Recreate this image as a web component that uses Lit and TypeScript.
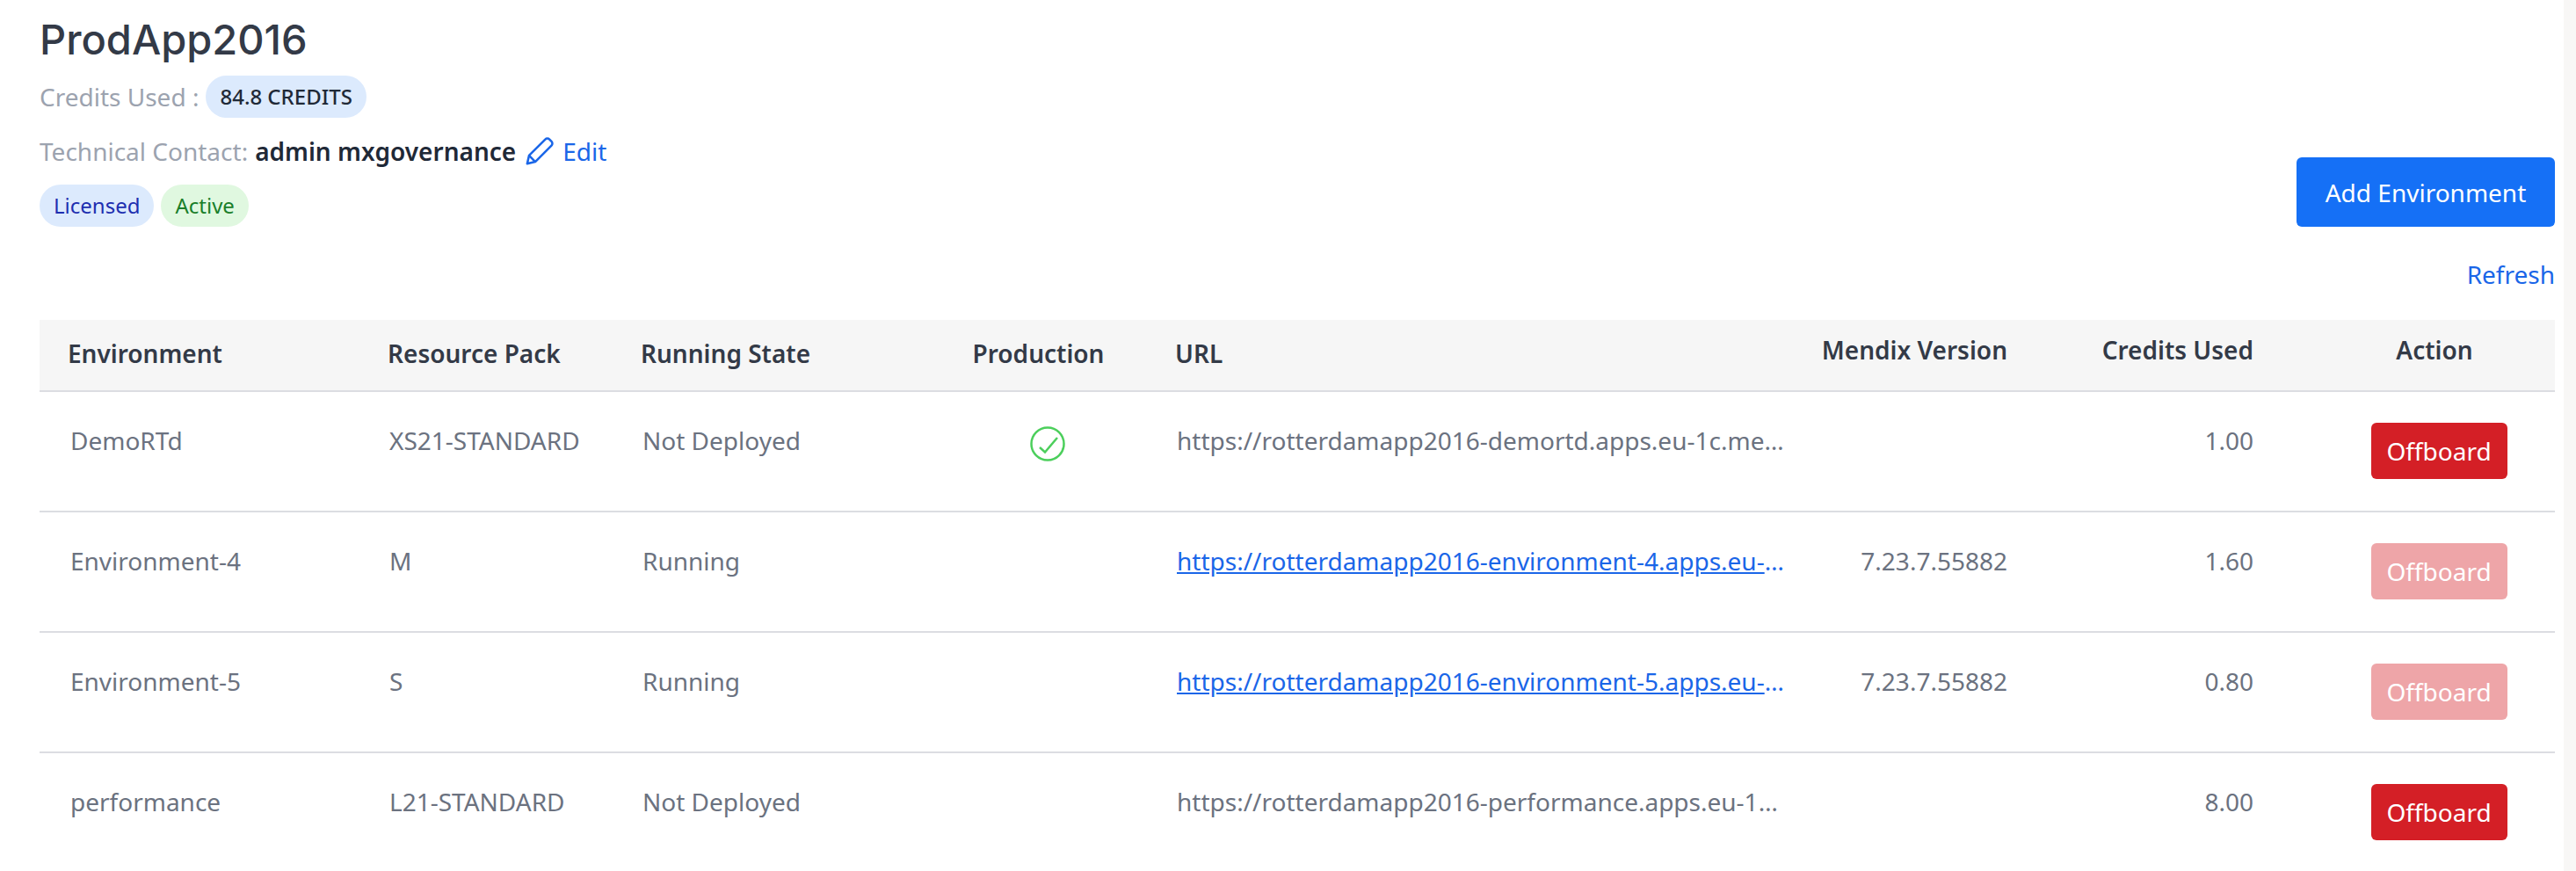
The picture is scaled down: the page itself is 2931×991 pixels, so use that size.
import { LitElement, css, html, nothing } from "lit";
import { customElement } from "lit/decorators.js";

interface Env {
  name: string;
  pack: string;
  state: string;
  production: boolean;
  url: string;
  linked: boolean;
  version: string;
  credits: string;
  canOffboard: boolean;
}

const ENVS: Env[] = [
  {
    name: "DemoRTd",
    pack: "XS21-STANDARD",
    state: "Not Deployed",
    production: true,
    url: "https://rotterdamapp2016-demortd.apps.eu-1c.me",
    linked: false,
    version: "",
    credits: "1.00",
    canOffboard: true,
  },
  {
    name: "Environment-4",
    pack: "M",
    state: "Running",
    production: false,
    url: "https://rotterdamapp2016-environment-4.apps.eu-",
    linked: true,
    version: "7.23.7.55882",
    credits: "1.60",
    canOffboard: false,
  },
  {
    name: "Environment-5",
    pack: "S",
    state: "Running",
    production: false,
    url: "https://rotterdamapp2016-environment-5.apps.eu-",
    linked: true,
    version: "7.23.7.55882",
    credits: "0.80",
    canOffboard: false,
  },
  {
    name: "performance",
    pack: "L21-STANDARD",
    state: "Not Deployed",
    production: false,
    url: "https://rotterdamapp2016-performance.apps.eu-1",
    linked: false,
    version: "",
    credits: "8.00",
    canOffboard: true,
  },
];

@customElement("app-root")
export class AppRoot extends LitElement {
  static styles = css`
    :host {
      display: block;
      height: 991px;
      overflow: hidden;
      background: #fff;
      font-family: "Noto Sans", sans-serif;
      font-size: 28px;
      color: #6b7280;
    }

    .page {
      width: 2917px;
      height: 991px;
      box-sizing: border-box;
      padding: 0 10px 0 45px;
      box-shadow: 14px 0 0 #f8f7f6;
    }

    .top {
      display: flex;
      justify-content: space-between;
      align-items: flex-start;
    }

    h1 {
      margin: 0;
      padding-top: 16px;
      font-family: Inter, sans-serif;
      font-size: 47px;
      font-weight: 500;
      line-height: 58px;
      color: #333a47;
    }

    .line {
      display: flex;
      align-items: center;
      color: #9ca3af;
    }

    .credits {
      margin-top: 12px;
      height: 48px;
    }

    .contact {
      margin-top: 14px;
      height: 48px;
    }

    .contact strong {
      margin-left: 8px;
      font-weight: 600;
      color: #1f2937;
    }

    .edit {
      display: flex;
      align-items: center;
      margin-left: 10px;
      color: #1a66e8;
    }

    .edit svg {
      width: 34px;
      height: 34px;
      margin-right: 9px;
    }

    .pill {
      display: inline-block;
      height: 48px;
      line-height: 48px;
      padding: 0 16px;
      border-radius: 24px;
      font-size: 24px;
      white-space: nowrap;
    }

    .pill.credit {
      margin-left: 8px;
      background: #dceafd;
      color: #1f2937;
      font-weight: 500;
    }

    .pills {
      display: flex;
      gap: 8px;
      margin-top: 14px;
    }

    .pill.licensed {
      background: #dceafd;
      color: #1e2fb0;
    }

    .pill.active {
      background: #e0f8e0;
      color: #1a7f2a;
    }

    .side {
      display: flex;
      flex-direction: column;
      align-items: flex-end;
      padding-top: 179px;
    }

    .add {
      width: 294px;
      height: 79px;
      border: 0;
      border-radius: 6px;
      background: #1570f6;
      color: #fff;
      font: inherit;
    }

    .refresh {
      margin-top: 34px;
      line-height: 40px;
      color: #1a66e8;
    }

    table {
      width: 100%;
      margin-top: 32px;
      border-collapse: collapse;
      table-layout: fixed;
    }

    th {
      height: 81px;
      box-sizing: border-box;
      padding: 0 32px 4px;
      background: #f6f6f6;
      border-bottom: 2px solid #dcdde2;
      font-weight: 600;
      color: #333a47;
      text-align: left;
      white-space: nowrap;
    }

    th.raised {
      padding-bottom: 12px;
    }

    th.center,
    td.center {
      text-align: center;
    }

    th.right,
    td.right {
      text-align: right;
    }

    th.version {
      padding-left: 0;
    }

    td {
      height: 137px;
      padding: 35px 32px 0 35px;
      box-sizing: border-box;
      border-bottom: 2px solid #dcdde2;
      vertical-align: top;
      line-height: 40px;
    }

    td:nth-child(n + 2) {
      padding-left: 34px;
    }

    td.center {
      padding-left: 52px;
    }

    tr:last-child td {
      border-bottom: 0;
    }

    .url {
      white-space: nowrap;
    }

    .url a {
      color: #1a66e8;
      text-decoration: underline;
    }

    .url.linked {
      color: #1a66e8;
    }

    .check {
      display: block;
      width: 40px;
      height: 40px;
      margin: 4px auto 0;
    }

    .offboard {
      display: block;
      width: 155px;
      height: 64px;
      margin: 0 auto;
      padding: 0;
      border: 0;
      border-radius: 6px;
      background: #d41f26;
      color: #fff;
      font: inherit;
    }

    .offboard.off {
      background: #eea5a8;
    }

    th.action {
      padding-left: 47px;
      padding-right: 10px;
    }

    td.action {
      padding-left: 47px;
      padding-right: 0;
    }
  `;

  private renderRow(env: Env) {
    return html`<tr>
      <td>${env.name}</td>
      <td>${env.pack}</td>
      <td>${env.state}</td>
      <td class="center">
        ${env.production
          ? html`<svg class="check" viewBox="0 0 40 40" fill="none" stroke="#4ccf5c" stroke-width="2.500">
              <circle cx="20" cy="20" r="18.500" />
              <path d="M11 24l6 5.500L31 13" />
            </svg>`
          : nothing}
      </td>
      <td>
        ${env.linked
          ? html`<span class="url linked"><a href="#">${env.url}</a>…</span>`
          : html`<span class="url">${env.url}…</span>`}
      </td>
      <td class="right">${env.version}</td>
      <td class="right">${env.credits}</td>
      <td class="action">
        <button class="offboard ${env.canOffboard ? "" : "off"}">Offboard</button>
      </td>
    </tr>`;
  }

  render() {
    return html`<div class="page">
      <div class="top">
        <div>
          <h1>ProdApp2016</h1>
          <div class="line credits">
            Credits Used :
            <span class="pill credit">84.8 CREDITS</span>
          </div>
          <div class="line contact">
            Technical Contact:
            <strong>admin mxgovernance</strong>
            <span class="edit">
              <svg viewBox="0 0 24 24" fill="none" stroke="currentColor" stroke-width="1.800" stroke-linejoin="round">
                <path d="M2 22l1.500-6.500L16.500 2.500a2.400 2.400 0 0 1 3.400 0l1.600 1.600a2.400 2.400 0 0 1 0 3.400L8.500 20.500z" />
                <path d="M3.500 15.500l5 5" />
              </svg>
              Edit
            </span>
          </div>
          <div class="pills">
            <span class="pill licensed">Licensed</span>
            <span class="pill active">Active</span>
          </div>
        </div>
        <div class="side">
          <button class="add">Add Environment</button>
          <span class="refresh">Refresh</span>
        </div>
      </div>
      <table>
        <colgroup>
          <col style="width: 364px" />
          <col style="width: 288px" />
          <col style="width: 361px" />
          <col style="width: 247px" />
          <col style="width: 765px" />
          <col style="width: 246px" />
          <col style="width: 280px" />
          <col />
        </colgroup>
        <thead>
          <tr>
            <th>Environment</th>
            <th>Resource Pack</th>
            <th>Running State</th>
            <th class="center">Production</th>
            <th>URL</th>
            <th class="right raised version">Mendix Version</th>
            <th class="right raised">Credits Used</th>
            <th class="center raised action">Action</th>
          </tr>
        </thead>
        <tbody>${ENVS.map((e) => this.renderRow(e))}</tbody>
      </table>
    </div>`;
  }
}
